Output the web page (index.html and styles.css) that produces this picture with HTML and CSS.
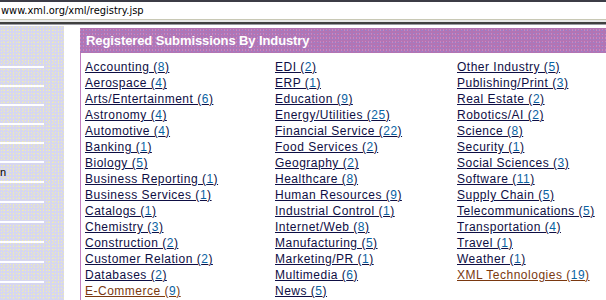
FILE: index.html
```html
<!DOCTYPE html>
<html lang="en">
<head>
    <meta charset="UTF-8">
    <title>XML.org Registry</title>
    <link rel="stylesheet" href="styles.css">
</head>
<body>

    <div class="addr">www.xml.org/xml/registry.jsp</div>
    <div class="rule"></div>

    <div class="page">
        <nav class="side">
            <div class="side-item top"></div>
            <div class="side-item"></div>
            <div class="side-item"></div>
            <div class="side-item"></div>
            <div class="side-item"></div>
            <div class="side-item"></div>
            <div class="side-item low"><span class="side-text">n</span></div>
            <div class="side-item low"></div>
            <div class="side-item low"></div>
            <div class="side-item low"></div>
            <div class="side-item low"></div>
            <div class="side-item low"></div>
        </nav>

        <section class="panel">
            <h2 class="panel-title">Registered Submissions By Industry</h2>
            <div class="cols">
                <ul class="col">
                    <li><a href="#">Accounting (<span class="n">8</span>)</a></li>
                    <li><a href="#">Aerospace (<span class="n">4</span>)</a></li>
                    <li><a href="#">Arts/Entertainment (<span class="n">6</span>)</a></li>
                    <li><a href="#">Astronomy (<span class="n">4</span>)</a></li>
                    <li><a href="#">Automotive (<span class="n">4</span>)</a></li>
                    <li><a href="#">Banking (<span class="n">1</span>)</a></li>
                    <li><a href="#">Biology (<span class="n">5</span>)</a></li>
                    <li><a href="#">Business Reporting (<span class="n">1</span>)</a></li>
                    <li><a href="#">Business Services (<span class="n">1</span>)</a></li>
                    <li><a href="#">Catalogs (<span class="n">1</span>)</a></li>
                    <li><a href="#">Chemistry (<span class="n">3</span>)</a></li>
                    <li><a href="#">Construction (<span class="n">2</span>)</a></li>
                    <li><a href="#">Customer Relation (<span class="n">2</span>)</a></li>
                    <li><a href="#">Databases (<span class="n">2</span>)</a></li>
                    <li><a href="#" class="visited">E-Commerce (<span class="n">9</span>)</a></li>
                </ul>
                <ul class="col">
                    <li><a href="#">EDI (<span class="n">2</span>)</a></li>
                    <li><a href="#">ERP (<span class="n">1</span>)</a></li>
                    <li><a href="#">Education (<span class="n">9</span>)</a></li>
                    <li><a href="#">Energy/Utilities (<span class="n">25</span>)</a></li>
                    <li><a href="#">Financial Service (<span class="n">22</span>)</a></li>
                    <li><a href="#">Food Services (<span class="n">2</span>)</a></li>
                    <li><a href="#">Geography (<span class="n">2</span>)</a></li>
                    <li><a href="#">Healthcare (<span class="n">8</span>)</a></li>
                    <li><a href="#">Human Resources (<span class="n">9</span>)</a></li>
                    <li><a href="#">Industrial Control (<span class="n">1</span>)</a></li>
                    <li><a href="#">Internet/Web (<span class="n">8</span>)</a></li>
                    <li><a href="#">Manufacturing (<span class="n">5</span>)</a></li>
                    <li><a href="#">Marketing/PR (<span class="n">1</span>)</a></li>
                    <li><a href="#">Multimedia (<span class="n">6</span>)</a></li>
                    <li><a href="#">News (<span class="n">5</span>)</a></li>
                </ul>
                <ul class="col">
                    <li><a href="#">Other Industry (<span class="n">5</span>)</a></li>
                    <li><a href="#">Publishing/Print (<span class="n">3</span>)</a></li>
                    <li><a href="#">Real Estate (<span class="n">2</span>)</a></li>
                    <li><a href="#">Robotics/AI (<span class="n">2</span>)</a></li>
                    <li><a href="#">Science (<span class="n">8</span>)</a></li>
                    <li><a href="#">Security (<span class="n">1</span>)</a></li>
                    <li><a href="#">Social Sciences (<span class="n">3</span>)</a></li>
                    <li><a href="#">Software (<span class="n">11</span>)</a></li>
                    <li><a href="#">Supply Chain (<span class="n">5</span>)</a></li>
                    <li><a href="#">Telecommunications (<span class="n">5</span>)</a></li>
                    <li><a href="#">Transportation (<span class="n">4</span>)</a></li>
                    <li><a href="#">Travel (<span class="n">1</span>)</a></li>
                    <li><a href="#">Weather (<span class="n">1</span>)</a></li>
                    <li><a href="#" class="visited">XML Technologies (<span class="n">19</span>)</a></li>
                </ul>
            </div>
        </section>
    </div>

</body>
</html>
```

FILE: styles.css
```css
body {
    margin: 0;
    padding: 0;
    background-color: #ffffff;
    font-family: 'Liberation Sans', Arial, sans-serif;
    overflow: hidden;
}
.addr {
    height: 17px;
    border-top: 2px solid #3c3c46;
    padding-left: 1px;
    font-family: 'DejaVu Sans', sans-serif;
    font-size: 9.9px;
    line-height: 17px;
    color: #000000;
}
.rule {
    height: 2px;
    border-top: 1px solid #c8c8b4;
    border-bottom: 2px solid #404040;
    background-color: #e8e8e8;
    box-shadow: 0 1px 0 #9c9ca4;
    margin-bottom: 2px;
}
.page {
    display: flex;
    height: 280px;
}
.side {
    width: 64px;
    flex-shrink: 0;
    margin-right: 16px;
    background-color: #d6d6f0;
    background-image:
        radial-gradient(circle, #efedb2 0.7px, transparent 1px),
        radial-gradient(circle, #e8e6c0 0.6px, transparent 1px);
    background-size: 3px 3px, 5px 4px;
    background-position: 0 0, 1px 2px;
}
.side-item {
    width: 44px;
    height: 17px;
    border-bottom: 2px solid #ffffff;
}
.side-item.top {
    height: 40px;
}
.side-item.low {
    height: 18px;
}
.side-text {
    display: block;
    padding-top: 1px;
    font-size: 11px;
    line-height: 16px;
    color: #000000;
}
.panel {
    flex: 1;
    margin-top: 2px;
    border-left: 1px solid #c07cc0;
}
.panel-title {
    margin: 0 0 0 -1px;
    height: 25px;
    padding-left: 6px;
    background-color: #b374b3;
    background-image:
        radial-gradient(circle, #9c80c8 0.6px, transparent 1px),
        radial-gradient(circle, #c888c0 0.6px, transparent 1px);
    background-size: 4px 3px, 3px 4px;
    background-position: 0 1px, 2px 0;
    color: #ffffff;
    font-size: 13px;
    font-weight: bold;
    letter-spacing: -0.1px;
    line-height: 25px;
}
.cols {
    display: grid;
    grid-template-columns: 190px 182px 1fr;
    padding: 6px 0 0 4px;
}
.col {
    list-style: none;
    margin: 0;
    padding: 0;
}
.col li {
    height: 16px;
    font-size: 12px;
    line-height: 16px;
    letter-spacing: 0.5px;
    white-space: nowrap;
}
.col a {
    color: #0e0e44;
    text-decoration: underline;
}
.col a.visited {
    color: #7a3810;
}
.n {
    color: #0a64a4;
}
```
